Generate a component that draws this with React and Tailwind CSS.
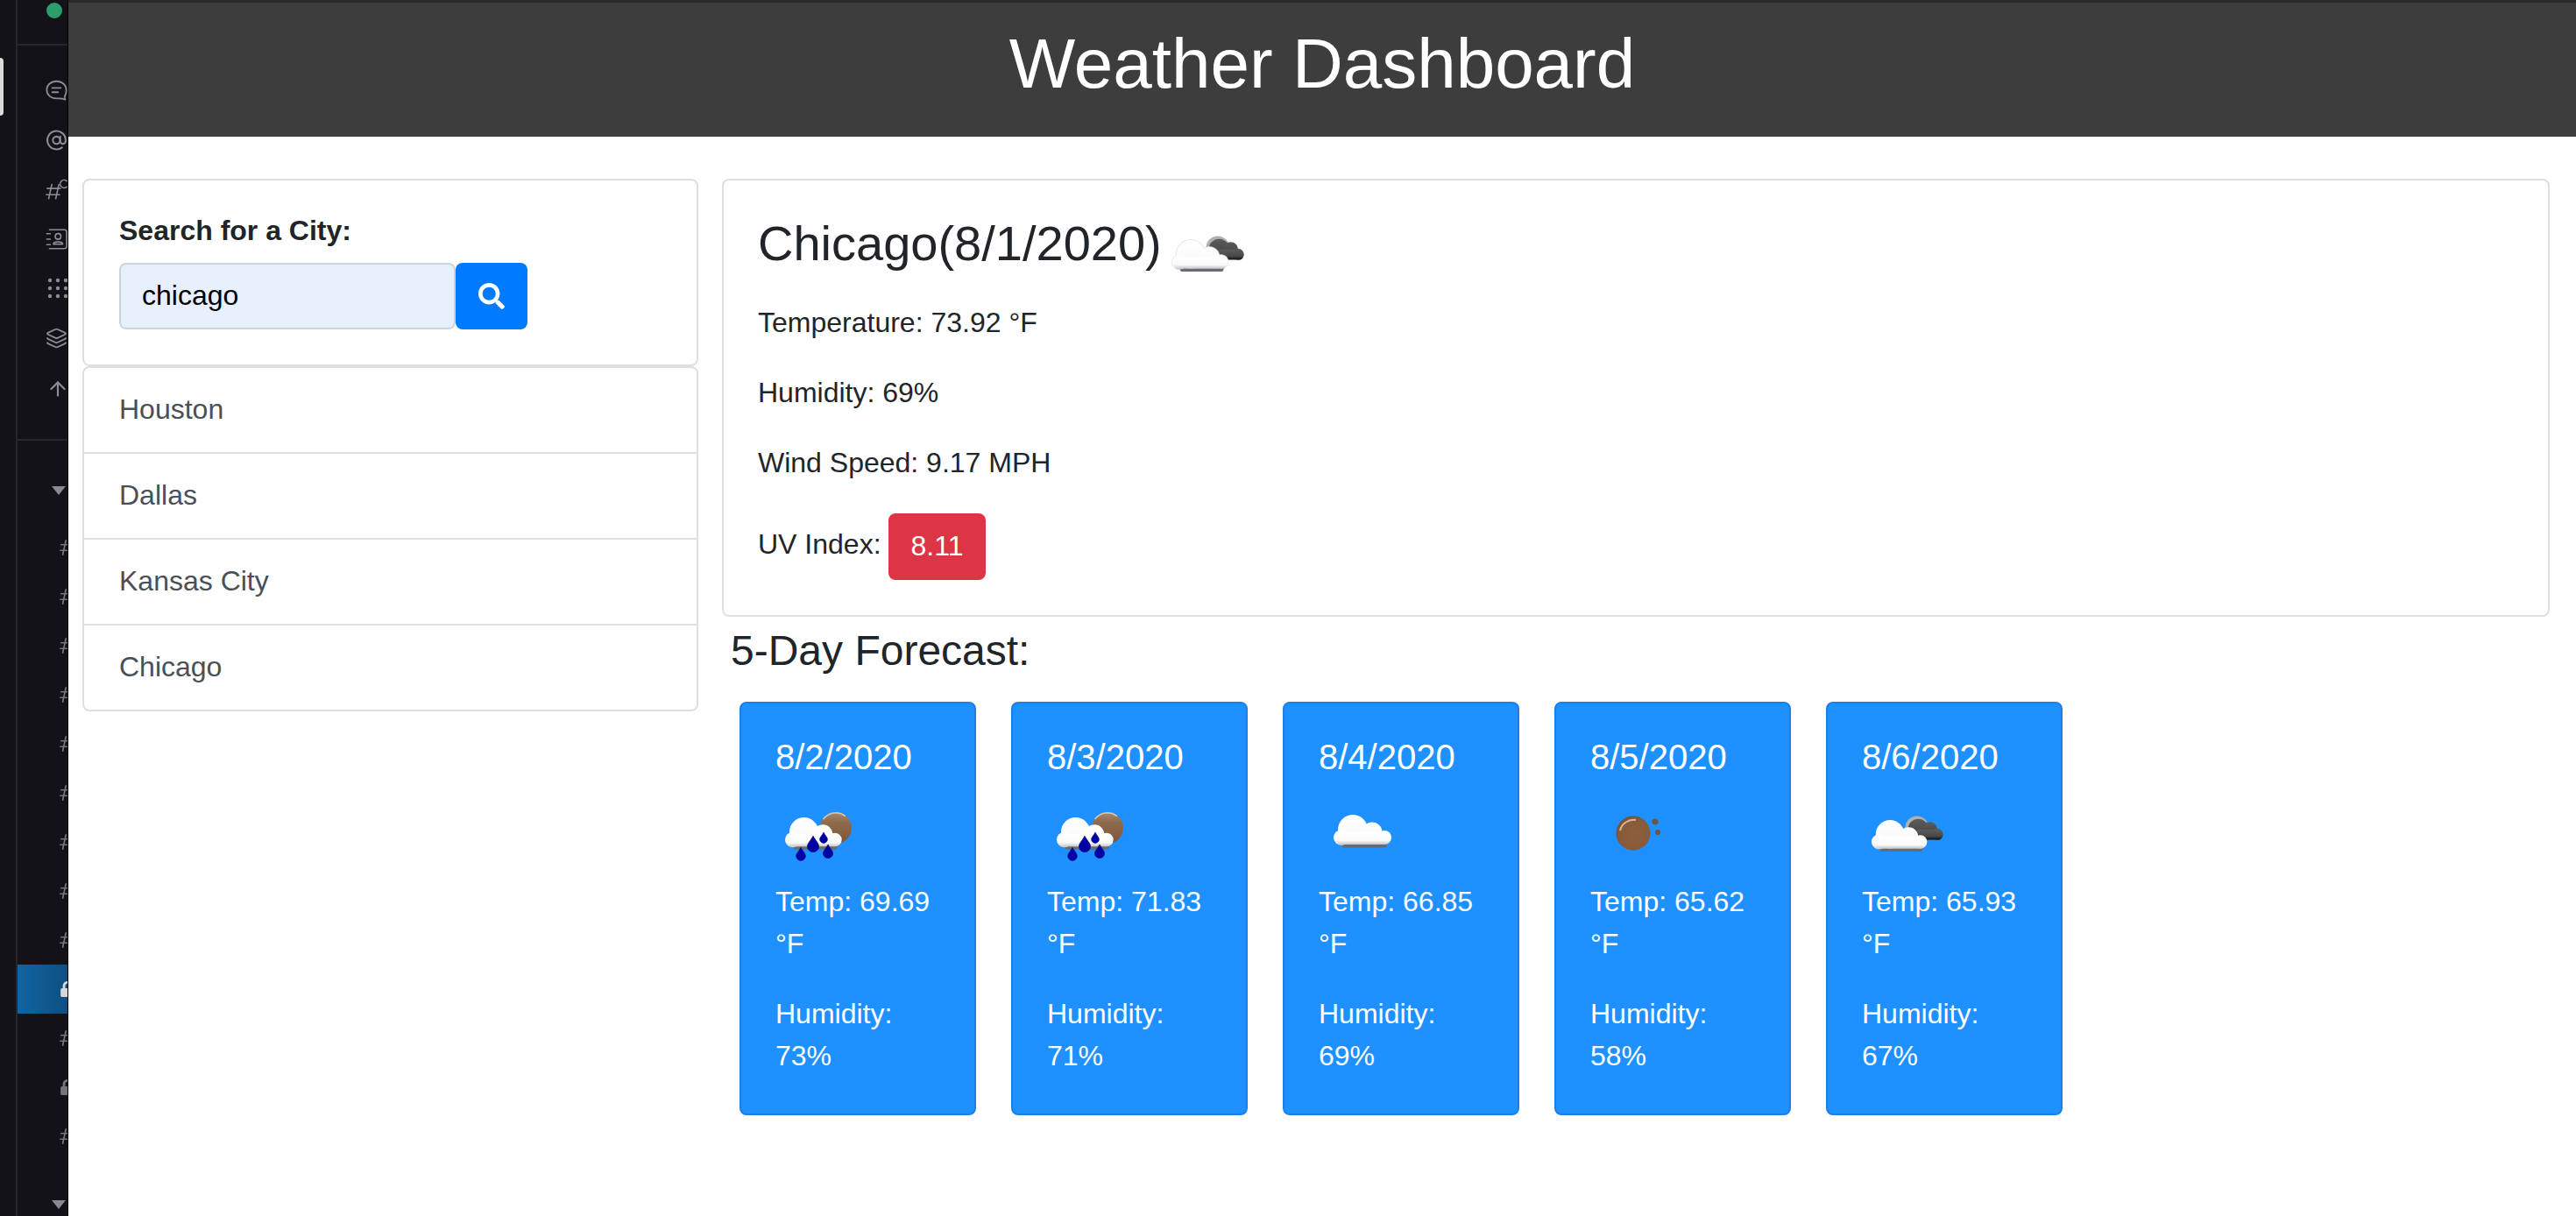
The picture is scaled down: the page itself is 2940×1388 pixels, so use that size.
import React from "react";
import { FaSearch, FaLock } from "react-icons/fa";
import { AtSign, Layers, ArrowUp } from "lucide-react";

const CloudShape = ({ fill, stroke }) => (
  <g fill={fill} stroke={stroke} strokeWidth={stroke ? 2 : 0}>
    <circle cx="22" cy="17" r="17" />
    <circle cx="44" cy="20" r="11.5" />
    <circle cx="58" cy="26" r="8" />
    <circle cx="9" cy="26" r="9" />
    <rect x="6" y="20" width="58" height="14" rx="6" />
  </g>
);

const WhiteCloud = ({ x, y, s = 1, id, outline }) => (
  <g transform={`translate(${x} ${y}) scale(${s})`}>
    <defs>
      <linearGradient id={id} x1="0" y1="0" x2="0" y2="1">
        <stop offset="0" stopColor="#ffffff" />
        <stop offset="0.68" stopColor="#fafafa" />
        <stop offset="1" stopColor="#c4c4c4" />
      </linearGradient>
    </defs>
    {outline && <CloudShape fill="#e9e9e9" stroke="#e9e9e9" />}
    <rect x="9" y="30" width="52" height="7.5" rx="3.5" fill="#666c75" />
    <CloudShape fill={`url(#${id})`} />
  </g>
);

const DarkCloud = ({ x, y, s = 1, id }) => (
  <g transform={`translate(${x} ${y}) scale(${s})`}>
    <defs>
      <linearGradient id={id} x1="0" y1="0" x2="0" y2="1">
        <stop offset="0" stopColor="#5c5c5c" />
        <stop offset="0.65" stopColor="#484848" />
        <stop offset="1" stopColor="#0e0e0e" />
      </linearGradient>
    </defs>
    <circle cx="13" cy="12" r="12.5" fill="#b0b0b0" />
    <g fill={`url(#${id})`}>
      <circle cx="14.5" cy="13.5" r="11" />
      <circle cx="27" cy="14" r="8" />
      <circle cx="35" cy="19" r="6" />
      <rect x="10" y="14" width="31" height="11" rx="5" />
    </g>
  </g>
);

const Drop = ({ x, y, r }) => (
  <path
    d={`M${x} ${y - r * 1.8} C${x + r * 0.4} ${y - r} ${x + r} ${y - r * 0.5} ${x + r} ${y} A${r} ${r} 0 1 1 ${x - r} ${y} C${x - r} ${y - r * 0.5} ${x - r * 0.4} ${y - r} ${x} ${y - r * 1.8}Z`}
    fill="#0000a6"
    stroke="#0a0a70"
    strokeWidth="0.6"
  />
);

const Sun = ({ cx, cy, r, id }) => (
  <g>
    <defs>
      <linearGradient id={id} x1="0" y1="0" x2="0" y2="1">
        <stop offset="0" stopColor="#a68b70" />
        <stop offset="0.3" stopColor="#8f6c4e" />
        <stop offset="1" stopColor="#7c5538" />
      </linearGradient>
    </defs>
    <circle cx={cx} cy={cy} r={r} fill={`url(#${id})`} />
    <path d={`M${cx - r * 0.8} ${cy - r * 0.55} A${r} ${r} 0 0 1 ${cx + r * 0.6} ${cy - r * 0.75}`} fill="none" stroke="#d6c4ae" strokeWidth="1.6" />
  </g>
);

const RainIcon = ({ id }) => (
  <svg viewBox="0 0 100 100" className="w-[100px] h-[100px] blur-[0.7px]">
    <Sun cx={69} cy={40} r={18} id={`${id}s`} />
    <WhiteCloud x={11} y={28} s={0.98} id={`${id}c`} />
    <Drop x={29} y={72} r={5.4} />
    <Drop x={43} y={61} r={6.6} />
    <Drop x={60} y={69} r={5.6} />
    <Drop x={55} y={53} r={4.4} />
  </svg>
);

const CloudIcon = ({ id }) => (
  <svg viewBox="0 0 100 100" className="w-[100px] h-[100px] blur-[0.7px]">
    <WhiteCloud x={17} y={25} s={1} id={id} />
  </svg>
);

const BrokenIcon = ({ id, className = "", outline }) => (
  <svg viewBox="0 0 100 100" className={`w-[100px] h-[100px] blur-[0.7px] ${className}`}>
    <DarkCloud x={49} y={27} s={1.06} id={`${id}d`} />
    <WhiteCloud x={11} y={31} s={0.96} id={`${id}w`} outline={outline} />
  </svg>
);

const ClearIcon = ({ id }) => (
  <svg viewBox="0 0 100 100" className="w-[100px] h-[100px] blur-[0.6px]">
    <defs>
      <radialGradient id={id} cx="0.55" cy="0.55" r="0.6">
        <stop offset="0" stopColor="#8c5f3f" />
        <stop offset="0.8" stopColor="#865a3a" />
        <stop offset="1" stopColor="#6f4a30" />
      </radialGradient>
    </defs>
    <circle cx="49" cy="46" r="19.5" fill={`url(#${id})`} />
    <path d="M34 43 A16 16 0 0 1 52 31" fill="none" stroke="#d9b79a" strokeWidth="2" />
    <circle cx="74" cy="33" r="3.6" fill="#6f5249" />
    <circle cx="77" cy="45" r="3" fill="#6f5249" />
  </svg>
);

const HashIcon = ({ className = "" }) => (
  <svg viewBox="0 0 24 24" className={`w-[22px] h-[22px] ${className}`} fill="none" stroke="#77767b" strokeWidth="1.8" strokeLinecap="round">
    <path d="M9 3 L5 21 M18 3 L14 21 M3 8.5 L21 8.5 M2 15.5 L20 15.5" />
  </svg>
);

const Caret = () => (
  <svg viewBox="0 0 16 10" className="w-4 h-[10px]">
    <path d="M0 0 H16 L8 10 Z" fill="#8a898d" />
  </svg>
);

const ThreadsIcon = () => (
  <svg viewBox="0 0 28 28" className="w-7 h-7" fill="none" stroke="#8d8c90" strokeWidth="2" strokeLinecap="round" strokeLinejoin="round">
    <path d="M14 2.5 C7 2.5 1.5 7 1.5 13.5 C1.5 20 7 24.5 14 24.5 C17 24.5 21 24 25 26 C24 23.5 24.5 21 25.5 19.5 C26.5 17.5 26.5 15 26.5 13.5 C26.5 7 21 2.5 14 2.5Z" />
    <path d="M8.5 11 H19.5 M8.5 16.5 H16" />
  </svg>
);

const HashC = () => (
  <svg viewBox="0 0 28 28" className="w-7 h-7" fill="none" stroke="#8d8c90" strokeWidth="1.8" strokeLinecap="round">
    <path d="M8 8 L4 26 M17 8 L13 26 M2 13 L19 13 M1 21 L18 21" />
    <path d="M27 3.5 A5 5 0 1 0 27 11" />
  </svg>
);

const ContactIcon = () => (
  <svg viewBox="0 0 28 28" className="w-7 h-7" fill="none" stroke="#8d8c90" strokeWidth="1.8" strokeLinecap="round" strokeLinejoin="round">
    <path d="M5 2 H24 A3 3 0 0 1 27 5 V23 A3 3 0 0 1 24 26 H5" />
    <path d="M1.5 7 H6 M1.5 14 H6 M1.5 21 H6" />
    <circle cx="16" cy="10.5" r="3.6" />
    <path d="M10 20.5 C10 16.5 22 16.5 22 20.5 Z" />
  </svg>
);

const DotsIcon = () => (
  <svg viewBox="0 0 24 24" className="w-6 h-6" fill="#8d8c90">
    {[3, 12, 21].map((cx) =>
      [3, 12, 21].map((cy) => <circle key={`${cx}-${cy}`} cx={cx} cy={cy} r="2.2" />)
    )}
  </svg>
);

const channels = ["hash", "hash", "hash", "hash", "hash", "hash", "hash", "hash", "hash", "active", "hash", "lock", "hash"];

const NavRow = ({ children, tall }) => (
  <div className={`${tall ? "h-[60px]" : "h-[56.5px]"} flex items-center pl-[32px]`}>{children}</div>
);

const Sidebar = () => (
  <aside className="w-[78px] h-full shrink-0 flex bg-[#131217] border-r border-black">
    <div className="w-5 h-full border-r-2 border-[#27262b] pt-[66px]">
      <div className="w-1 h-[66px] rounded-r-md bg-[#dcdcdc]" />
    </div>
    <div className="flex-1 min-w-0 overflow-hidden">
      <div className="h-[52px] border-b-2 border-[#27262b] pt-[3px] pl-[33px]">
        <div className="w-[18px] h-[18px] rounded-full bg-[#2b9e6c]" />
      </div>
      <div className="pt-[23px] pb-[27px] border-b-2 border-[#27262b] overflow-hidden">
        <NavRow><ThreadsIcon /></NavRow>
        <NavRow><AtSign size={28} color="#8d8c90" strokeWidth={2} /></NavRow>
        <NavRow><HashC /></NavRow>
        <NavRow><ContactIcon /></NavRow>
        <NavRow><div className="pl-[2px]"><DotsIcon /></div></NavRow>
        <NavRow><Layers size={28} color="#8d8c90" strokeWidth={1.8} /></NavRow>
        <NavRow tall><div className="pl-[1px]"><ArrowUp size={26} color="#8d8c90" strokeWidth={2} /></div></NavRow>
      </div>
      <div className="pt-[29px]">
        <div className="h-14 flex items-center pl-[39px]"><Caret /></div>
        <div className="pt-[9px]">
          {channels.map((c, i) =>
            c === "active" ? (
              <div key={i} className="h-14 flex items-center pl-[48px] bg-linear-to-r from-[#1164a3] to-[#0e4f80]">
                <FaLock size={18} color="#d6d6d8" className="shrink-0" />
              </div>
            ) : (
              <div key={i} className="h-14 flex items-center pl-[47px]">
                {c === "lock" ? <FaLock size={18} color="#77767b" className="shrink-0 ml-[1px]" /> : <HashIcon className="shrink-0" />}
              </div>
            )
          )}
        </div>
        <div className="h-14 mt-[22px] flex items-center pl-[39px]"><Caret /></div>
      </div>
    </div>
  </aside>
);

const forecast = [
  { date: "8/2/2020", temp: "69.69", hum: "73%", icon: <RainIcon id="r1" /> },
  { date: "8/3/2020", temp: "71.83", hum: "71%", icon: <RainIcon id="r2" /> },
  { date: "8/4/2020", temp: "66.85", hum: "69%", icon: <CloudIcon id="c3" /> },
  { date: "8/5/2020", temp: "65.62", hum: "58%", icon: <ClearIcon id="m4" /> },
  { date: "8/6/2020", temp: "65.93", hum: "67%", icon: <BrokenIcon id="b5" /> },
];

const cities = ["Houston", "Dallas", "Kansas City", "Chicago"];

export default function App() {
  return (
    <div className="w-[2940px] h-[1388px] overflow-hidden flex bg-white text-[32px] leading-[48px] text-[#212529] font-['Liberation_Sans',Arial,sans-serif]">
      <Sidebar />
      <main className="flex-1 min-w-0 flex flex-col">
        <header className="h-[156px] shrink-0 border-t-[3px] border-[#2a2a2d] bg-[#3d3d3d] text-center">
          <h1 className="text-[80px] leading-[96px] text-white pt-[22px]">Weather Dashboard</h1>
        </header>
        <div className="flex items-start gap-[27px] pl-[16px] pr-[30px] pt-[48px]">
          <section className="w-[703px] shrink-0">
            <div className="border-2 border-[#dfdfdf] rounded-lg px-[40px] pt-[38px] pb-[40px]">
              <label className="block font-bold leading-[38px] mb-[18px]">Search for a City:</label>
              <div className="flex">
                <input
                  readOnly
                  value="chicago"
                  className="w-[384px] h-[76px] px-[24px] pb-[2px] bg-[#e8f0fe] border-2 border-[#ced4da] rounded-lg text-black outline-none"
                />
                <button className="w-[82px] h-[76px] flex items-center justify-center rounded-lg bg-[#007bff] text-white">
                  <FaSearch size={30} />
                </button>
              </div>
            </div>
            <ul className="border-2 border-[#dfdfdf] rounded-lg">
              {cities.map((c, i) => (
                <li key={c} className={`px-[40px] pt-[23px] pb-[25px] text-[#495057] ${i > 0 ? "border-t-2 border-[#dfdfdf]" : ""}`}>
                  {c}
                </li>
              ))}
            </ul>
          </section>
          <section className="flex-1 min-w-0">
            <div className="border-2 border-[#dfdfdf] rounded-lg pl-[39px] pr-[40px] pt-[40px] pb-[40px]">
              <div className="flex items-start h-[98px]">
                <h3 className="text-[56px] leading-[63px]">Chicago(8/1/2020)</h3>
                <BrokenIcon id="b0" outline className="ml-[1px] -mt-[3px]" />
              </div>
              <p className="mb-[32px]">Temperature: 73.92 °F</p>
              <p className="mb-[32px]">Humidity: 69%</p>
              <p className="mb-[34px]">Wind Speed: 9.17 MPH</p>
              <div className="flex items-center gap-[8px]">
                <span className="pb-[6px]">UV Index:</span>
                <span className="h-[76px] px-[26px] pb-[3px] flex items-center rounded-lg bg-[#dc3545] text-white">8.11</span>
              </div>
            </div>
            <h4 className="text-[48px] leading-[58px] ml-[10px] mt-[10px]">5-Day Forecast:</h4>
            <div className="flex gap-[40px] ml-[20px] mt-[29px]">
              {forecast.map((d) => (
                <article key={d.date} className="w-[270px] h-[472px] border-2 border-[#1b80e6] rounded-lg bg-[#1e90ff] text-white pl-[39px] pr-[40px] pt-[37px]">
                  <h5 className="text-[40px] leading-[48px] mb-[17px]">{d.date}</h5>
                  {d.icon}
                  <p className="mb-[32px]">Temp: {d.temp} °F</p>
                  <p>Humidity: {d.hum}</p>
                </article>
              ))}
            </div>
          </section>
        </div>
      </main>
    </div>
  );
}
